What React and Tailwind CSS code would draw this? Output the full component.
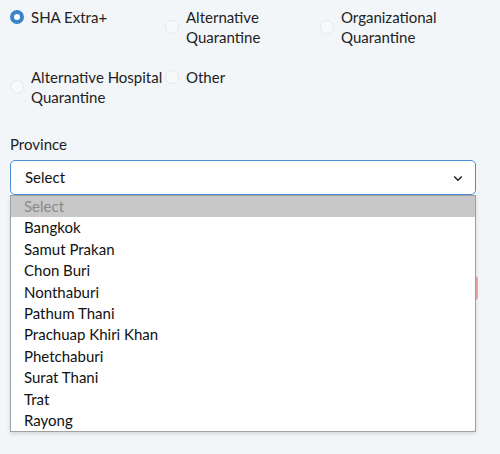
import React from "react";

const options = [
  { label: "SHA Extra+", checked: true },
  { label: "Alternative Quarantine" },
  { label: "Organizational Quarantine" },
  { label: "Alternative Hospital Quarantine" },
  { label: "Other" },
];

const provinces = [
  "Bangkok",
  "Samut Prakan",
  "Chon Buri",
  "Nonthaburi",
  "Pathum Thani",
  "Prachuap Khiri Khan",
  "Phetchaburi",
  "Surat Thani",
  "Trat",
  "Rayong",
];

function Radio({ label, checked }) {
  return (
    <label className="flex items-center gap-[7px] text-[15px] leading-[20px] text-[#222]">
      <span
        className={
          checked
            ? "w-[14px] h-[14px] shrink-0 rounded-full border-[4px] border-[#3a83c8] bg-white"
            : "w-[14px] h-[14px] shrink-0 rounded-full border border-[#e6e9ec] bg-[#f8f9fa]"
        }
      />
      <span>{label}</span>
    </label>
  );
}

export default function App() {
  return (
    <div
      className="w-[500px] h-[454px] bg-[#f3f6f9] px-[10px] pt-[7px] overflow-hidden"
      style={{ fontFamily: "Lato, 'Noto Sans', sans-serif" }}
    >
      <div className="grid grid-cols-[155px_155px_155px] items-start gap-y-[20px] w-[466px]">
        {options.map((o) => (
          <Radio key={o.label} {...o} />
        ))}
      </div>

      <div className="mt-[27px] text-[15px] leading-[20px] text-[#222]">Province</div>

      <div className="relative mt-[6px] w-[466px]">
        <div className="h-[35px] rounded-[5px] border border-[#4a8fd6] bg-white flex items-center justify-between pl-[14px] pr-[11px] text-[15px] text-[#111]">
          <span>Select</span>
          <svg width="12" height="12" viewBox="0 0 16 16" fill="none" stroke="#222" strokeWidth="2">
            <path d="M3 6l5 5 5-5" />
          </svg>
        </div>

        <div className="mt-[80px] mr-[-2px] flex justify-end">
          <div className="w-[120px] h-[26px] rounded-[4px] border border-[#e8b4b8] bg-[#e9a0a6]" />
        </div>

        <div className="absolute left-0 top-[35px] w-[466px] bg-white border border-[#a0a0a0] shadow-[0_2px_4px_rgba(0,0,0,0.12)] z-10">
          <div className="h-[21.4px] leading-[21.4px] bg-[#c8c8c8] text-[#8a8a8a] text-[15px] pl-[13px]">Select</div>
          {provinces.map((p) => (
            <div key={p} className="h-[21.4px] leading-[21.4px] text-[15px] text-[#111] pl-[13px]">
              {p}
            </div>
          ))}
        </div>
      </div>
    </div>
  );
}
